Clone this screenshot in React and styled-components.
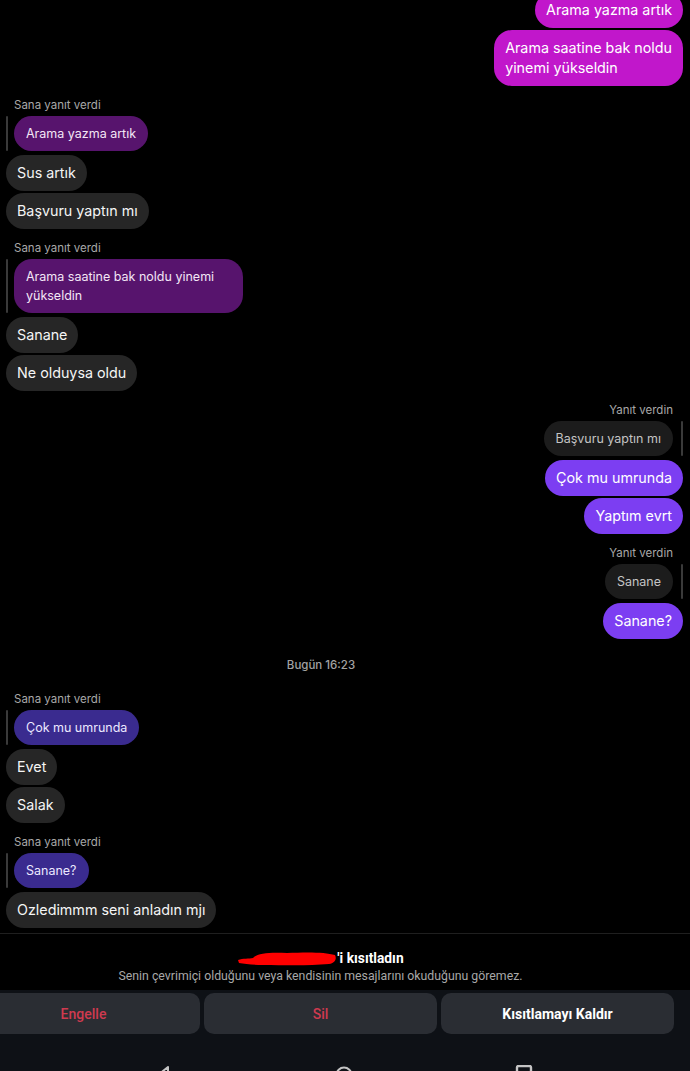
import React from "react";
import styled, { createGlobalStyle } from "styled-components";

const GlobalStyle = createGlobalStyle`
  html, body {
    margin: 0;
    padding: 0;
    background: #000;
  }
  body {
    font-family: Inter, "Noto Sans", sans-serif;
    -webkit-font-smoothing: antialiased;
  }
  #root {
    width: 690px;
    height: 1071px;
    overflow: hidden;
  }
`;

const bubbleTones = {
  magenta: { bg: "#c117cb", fg: "#ffffff" },
  violet: { bg: "#7c3ef2", fg: "#ffffff" },
  gray: { bg: "#262626", fg: "#f5f5f5" },
};

const quoteTones = {
  plum: { bg: "#57146d", fg: "#f3e6f5" },
  indigo: { bg: "#3a2b8f", fg: "#ece9ff" },
  dark: { bg: "#1c1c1c", fg: "#c4c4c4" },
};

const Screen = styled.div`
  width: 690px;
  height: 1071px;
  display: flex;
  flex-direction: column;
  background: #000;
  overflow: hidden;
`;

const Chat = styled.div`
  flex: 1;
  min-height: 0;
  overflow: hidden;
  display: flex;
  flex-direction: column;
  justify-content: flex-end;
`;

const Thread = styled.div`
  display: flex;
  flex-direction: column;
  padding: 0 7px 5px 6px;

  & > * + * {
    margin-top: 12px;
  }
`;

const Group = styled.div`
  display: flex;
  flex-direction: column;
  align-items: ${(p) => (p.$out ? "flex-end" : "flex-start")};
`;

const Label = styled.div`
  font-size: 11.5px;
  line-height: 14px;
  color: #a8a8a8;
  margin: ${(p) => (p.$out ? "0 10px 4px 0" : "0 0 4px 8px")};
`;

const QuoteRow = styled.div`
  display: flex;
  flex-direction: ${(p) => (p.$out ? "row-reverse" : "row")};
  align-items: stretch;
  gap: ${(p) => (p.$out ? "8px" : "6px")};
  margin-bottom: 4px;
`;

const QuoteLine = styled.div`
  width: 2px;
  border-radius: 1px;
  background: #3a3a3a;
`;

const Quote = styled.div`
  max-width: 205px;
  padding: 8px 12px;
  font-size: 12.5px;
  line-height: 19px;
  border-radius: 18px;
  background: ${(p) => quoteTones[p.$tone].bg};
  color: ${(p) => quoteTones[p.$tone].fg};
`;

const Bubble = styled.div`
  padding: 8px 11px;
  font-size: 14.3px;
  line-height: 20px;
  border-radius: 18px;
  white-space: pre-line;
  background: ${(p) => bubbleTones[p.$tone].bg};
  color: ${(p) => bubbleTones[p.$tone].fg};

  & + & {
    margin-top: 2px;
  }
`;

const Stamp = styled.div`
  text-align: center;
  font-size: 11.5px;
  line-height: 14px;
  font-weight: 500;
  color: #a3a3a3;
  padding: 7px 47px 8px 0;
`;

const Divider = styled.div`
  flex-shrink: 0;
  height: 1px;
  background: #1f1f1f;
`;

const Bottom = styled.div`
  flex-shrink: 0;
  margin: 0 16px 0 -33px;
  display: flex;
  flex-direction: column;
  font-family: Roboto, "Noto Sans", sans-serif;
`;

const Notice = styled.div`
  padding: 15px 0 7px;
  text-align: center;
`;

const NoticeTitle = styled.div`
  display: flex;
  justify-content: center;
  align-items: center;
  font-size: 13.8px;
  line-height: 18px;
  font-weight: 700;
  color: #fff;
`;

const NoticeText = styled.div`
  margin-top: 2px;
  font-size: 12.3px;
  line-height: 14px;
  color: #a8a8a8;
`;

const ActionBar = styled.div`
  background: #0e1116;
  margin: 0 -16px 0 0;
  padding: 3px 16px 0 0;
  height: 78px;
  overflow: hidden;
`;

const Actions = styled.div`
  display: grid;
  grid-template-columns: repeat(3, 233px);
  gap: 4px;
`;

const ActionButton = styled.button`
  height: 41px;
  border: none;
  border-radius: 10px;
  background: #2a2d33;
  font-family: Roboto, "Noto Sans", sans-serif;
  font-size: 14px;
  font-weight: ${(p) => (p.$danger ? 500 : 700)};
  color: ${(p) => (p.$danger ? "#cf3a4f" : "#ffffff")};
  padding: 0;
`;

const NavBar = styled.div`
  display: flex;
  justify-content: center;
  gap: 160px;
  padding: 31px 0 0 0;
  margin-right: -46px;
  color: #c4c4c4;
`;

const NavIcon = styled.svg`
  width: 20px;
  height: 20px;
  display: block;
`;

function Redaction() {
  return (
    <svg width="100" height="18" viewBox="0 0 100 18" aria-hidden="true">
      <path
        d="M1 11 C 6 9, 12 10, 16 9 C 20 4, 34 3, 50 4 C 70 3, 88 3, 98 6 C 100 10, 98 14, 92 15 C 70 17, 46 16, 26 16 C 16 16, 8 15, 2 14 Z"
        fill="#ff0000"
      />
    </svg>
  );
}

const thread = [
  {
    kind: "group",
    out: true,
    bubbles: ["Arama yazma artık", "Arama saatine bak noldu\nyinemi yükseldin"],
    tone: "magenta",
  },
  {
    kind: "group",
    out: false,
    label: "Sana yanıt verdi",
    quote: "Arama yazma artık",
    quoteTone: "plum",
    bubbles: ["Sus artık", "Başvuru yaptın mı"],
    tone: "gray",
  },
  {
    kind: "group",
    out: false,
    label: "Sana yanıt verdi",
    quote: "Arama saatine bak noldu yinemi yükseldin",
    quoteTone: "plum",
    bubbles: ["Sanane", "Ne olduysa oldu"],
    tone: "gray",
  },
  {
    kind: "group",
    out: true,
    label: "Yanıt verdin",
    quote: "Başvuru yaptın mı",
    quoteTone: "dark",
    bubbles: ["Çok mu umrunda", "Yaptım evrt"],
    tone: "violet",
  },
  {
    kind: "group",
    out: true,
    label: "Yanıt verdin",
    quote: "Sanane",
    quoteTone: "dark",
    bubbles: ["Sanane?"],
    tone: "violet",
  },
  { kind: "stamp", text: "Bugün 16:23" },
  {
    kind: "group",
    out: false,
    label: "Sana yanıt verdi",
    quote: "Çok mu umrunda",
    quoteTone: "indigo",
    bubbles: ["Evet", "Salak"],
    tone: "gray",
  },
  {
    kind: "group",
    out: false,
    label: "Sana yanıt verdi",
    quote: "Sanane?",
    quoteTone: "indigo",
    bubbles: ["Ozledimmm seni anladın mjı"],
    tone: "gray",
  },
];

export default function App() {
  return (
    <>
      <GlobalStyle />
      <Screen>
        <Chat>
          <Thread>
            {thread.map((item, i) =>
              item.kind === "stamp" ? (
                <Stamp key={i}>{item.text}</Stamp>
              ) : (
                <Group key={i} $out={item.out}>
                  {item.label && <Label $out={item.out}>{item.label}</Label>}
                  {item.quote && (
                    <QuoteRow $out={item.out}>
                      <QuoteLine />
                      <Quote $tone={item.quoteTone}>{item.quote}</Quote>
                    </QuoteRow>
                  )}
                  {item.bubbles.map((b, j) => (
                    <Bubble key={j} $tone={item.tone}>
                      {b}
                    </Bubble>
                  ))}
                </Group>
              )
            )}
          </Thread>
        </Chat>
        <Divider />
        <Bottom>
          <Notice>
            <NoticeTitle>
              <Redaction />
              <span>'i kısıtladın</span>
            </NoticeTitle>
            <NoticeText>
              Senin çevrimiçi olduğunu veya kendisinin mesajlarını okuduğunu göremez.
            </NoticeText>
          </Notice>
          <ActionBar>
            <Actions>
              <ActionButton $danger>Engelle</ActionButton>
              <ActionButton $danger>Sil</ActionButton>
              <ActionButton>Kısıtlamayı Kaldır</ActionButton>
            </Actions>
            <NavBar>
              <NavIcon viewBox="0 0 20 20">
                <path
                  d="M14 2 L4 10 L14 18 Z"
                  fill="none"
                  stroke="currentColor"
                  strokeWidth="2"
                  strokeLinejoin="round"
                />
              </NavIcon>
              <NavIcon viewBox="0 0 20 20">
                <circle cx="10" cy="10" r="7.5" fill="none" stroke="currentColor" strokeWidth="2" />
              </NavIcon>
              <NavIcon viewBox="0 0 20 20">
                <rect x="3" y="1" width="14" height="16" rx="1.5" fill="none" stroke="currentColor" strokeWidth="2.4" />
              </NavIcon>
            </NavBar>
          </ActionBar>
        </Bottom>
      </Screen>
    </>
  );
}
